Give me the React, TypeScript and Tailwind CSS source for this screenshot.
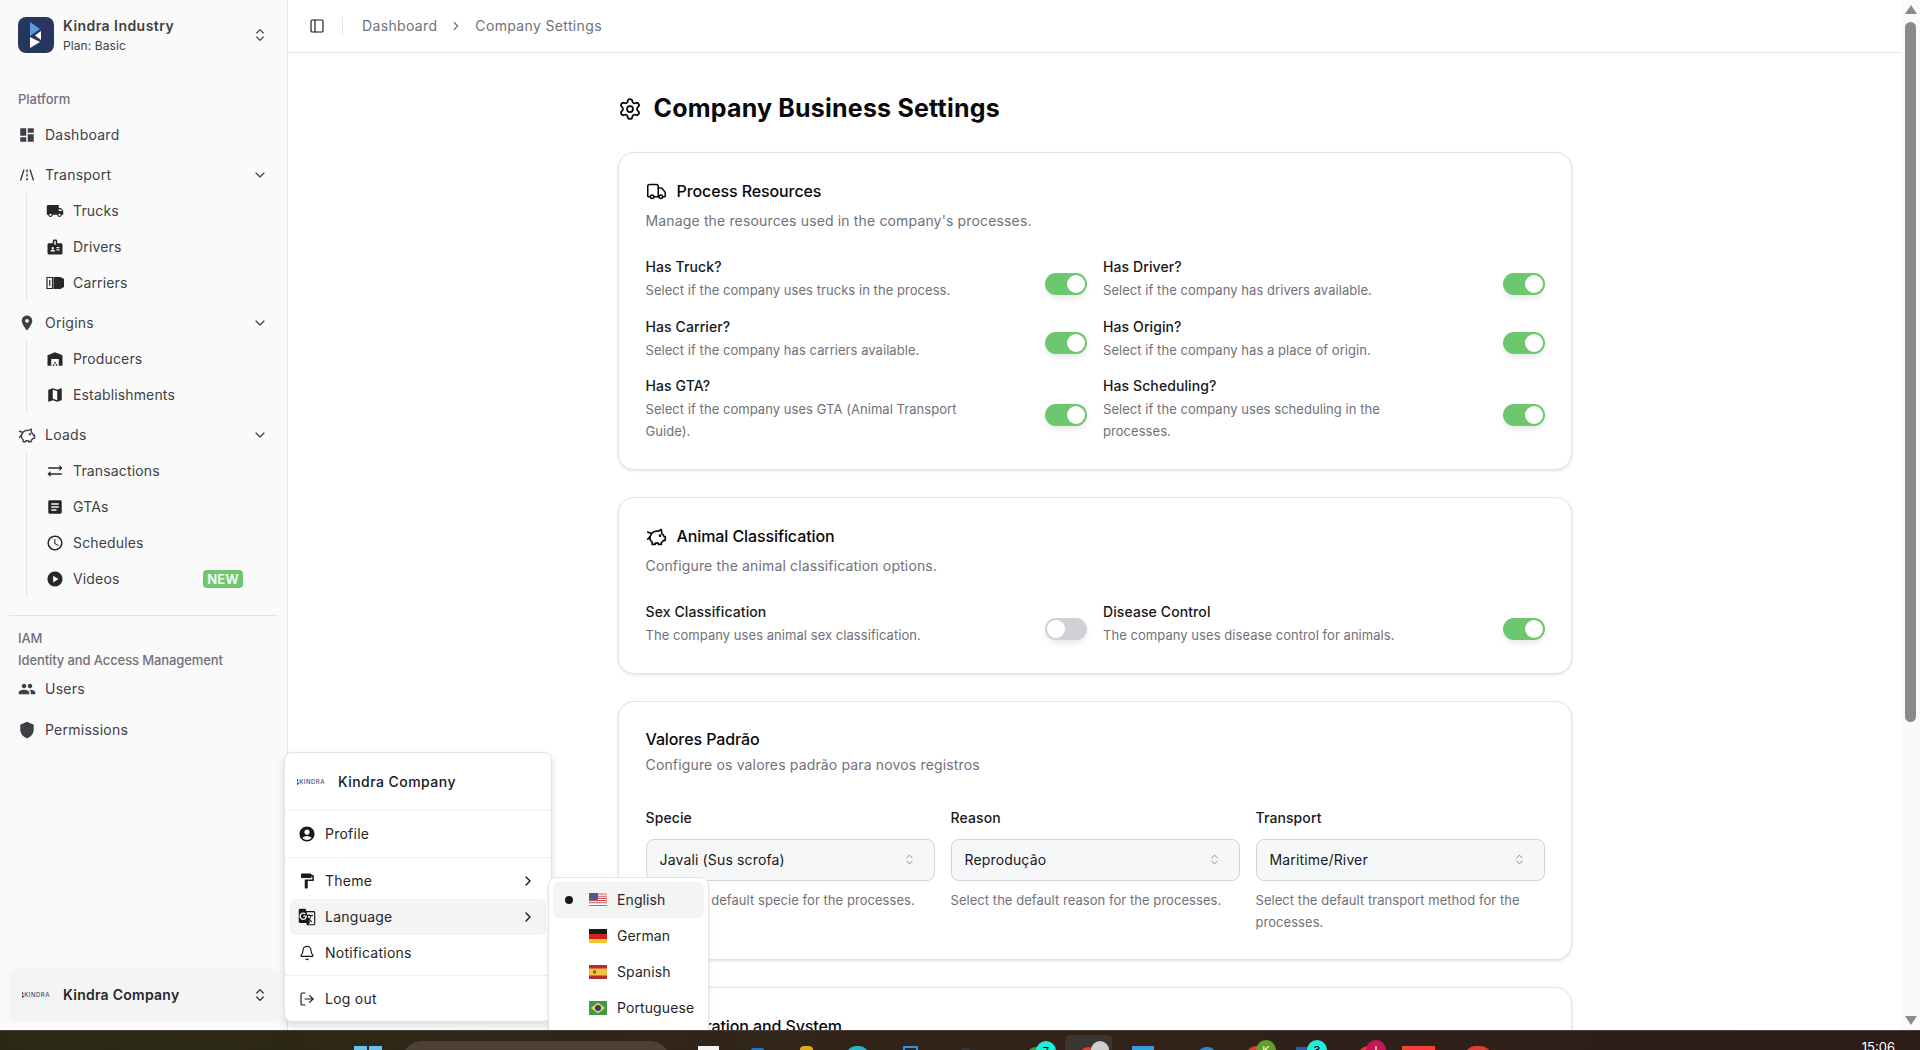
import type { ReactNode } from 'react';
import {
  Bell,
  ChevronDown,
  ChevronRight,
  ChevronsUpDown,
  LogOut,
  PanelLeft,
  Settings,
  Truck,
} from 'lucide-react';
import {
  MdAccessTime,
  MdAccountCircle,
  MdArticle,
  MdBadge,
  MdDashboard,
  MdFormatPaint,
  MdGTranslate,
  MdLocalShipping,
  MdMap,
  MdPeople,
  MdPlace,
  MdPlayCircle,
  MdShield,
  MdSyncAlt,
  MdWarehouse,
} from 'react-icons/md';

const RoadIcon = () => (
  <svg width="16" height="16" viewBox="0 0 16 16" fill="none" stroke="currentColor" strokeWidth="1.4">
    <path d="M5 2.500 1.500 13.500M11 2.500l3.500 11M8 2.500v3M8 7v2.500M8 11v2.500" />
  </svg>
);

const PigIcon = ({ size }: { size: number }) => (
  <svg width={size} height={size} viewBox="0 0 24 24" fill="none" stroke="currentColor" strokeWidth="1.9" strokeLinejoin="round" strokeLinecap="round">
    <path d="M6.500 8.500C8.500 6 11 5.500 14 6l3.500-2 .5 4.500c1.200 1 2 2 2.500 3.500H22v4.500h-2c-.5 1-1.200 1.800-2.500 2.500v2H14v-1.500h-3.500V21H7v-2.500c-2-1.500-2.800-3.500-2.500-6z" />
    <path d="M6.500 8.500 2 7M4.500 12.500 2 15" />
    <circle cx="16" cy="11" r=".6" fill="currentColor" />
  </svg>
);

const CarrierIcon = () => (
  <svg width="18" height="14" viewBox="0 0 18 14">
    <path d="M1 1.500h5.500v11H1z" fill="none" stroke="currentColor" strokeWidth="1.200" />
    <path d="M3.700 4v6" stroke="currentColor" strokeWidth="1.200" />
    <path d="M7.500 1h7l3.500 2v8l-3.500 2h-7z" fill="currentColor" />
  </svg>
);

const KindraLogo = () => (
  <div className="flex items-center w-[28px] shrink-0">
    <svg width="4" height="12" viewBox="0 0 4 12">
      <path d="M0 0l3 3-3 3zM3 6v0L0 8v4l3-3z" fill="#27365f" />
    </svg>
    <span className="text-[6px] leading-none tracking-[0.5px] font-medium text-[#45506e]">KINDRA</span>
  </div>
);

const NavItem = ({ icon, label, chevron }: { icon: ReactNode; label: string; chevron?: boolean }) => (
  <div className="flex items-center h-[37px] pl-[18px] pr-[20px] text-sm tracking-[0.25px] text-[#3f3f46]">
    <span className="flex justify-center w-[18px] text-[#3f3f46]">{icon}</span>
    <span className="ml-[9px] flex-1">{label}</span>
    {chevron && <ChevronDown size={16} strokeWidth={1.75} className="text-[#3f3f46] mr-[-1px]" />}
  </div>
);

const SubItem = ({ icon, label, badge }: { icon: ReactNode; label: string; badge?: boolean }) => (
  <div className="flex items-center h-[36px] pl-[19px] text-sm tracking-[0.15px] text-[#3f3f46]">
    <span className="flex justify-center w-[18px] text-[#27272a]">{icon}</span>
    <span className="ml-[9px] flex-1">{label}</span>
    {badge && (
      <span className="mr-[16px] w-[40px] h-[18px] rounded bg-[#6cc76f] text-[#eef9ee] text-[13px] font-bold leading-[18px] tracking-normal text-center">
        NEW
      </span>
    )}
  </div>
);

const SubGroup = ({ children }: { children: ReactNode }) => (
  <div className="ml-[26px] mr-[28px] border-l border-[#e4e4e7] mb-[3px]">{children}</div>
);

const Sidebar = () => (
  <aside className="relative w-[288px] shrink-0 border-r border-[#e4e4e7] bg-[#fafafa]">
    <div className="flex items-center h-[70px] pl-[18px] pr-[19px]">
      <div className="flex items-center justify-center w-[36px] h-[36px] rounded-lg bg-[#27365f]">
        <svg width="14" height="26" viewBox="0 0 14 26">
          <path d="M1 0l10 7-10 7z" fill="#5b9be0" />
          <path d="M12 9v9l-6-4.500z" fill="#fff" />
          <path d="M1 15l10 5-10 6z" fill="#fff" />
        </svg>
      </div>
      <div className="ml-[9px] flex-1">
        <div className="text-sm font-semibold leading-5 tracking-[0.45px] text-[#3f3f46]">Kindra Industry</div>
        <div className="mt-[2px] text-xs leading-4 tracking-[0.1px] text-[#3f3f46]">Plan: Basic</div>
      </div>
      <ChevronsUpDown size={16} strokeWidth={1.75} className="text-[#3f3f46]" />
    </div>
    <div className="pl-[18px] mt-[19px] h-[20px] text-[13px] font-medium leading-5 text-[#71717a]">Platform</div>
    <div className="mt-[7px]">
      <NavItem icon={<MdDashboard size={18} />} label="Dashboard" />
      <div className="mt-[3px]">
        <NavItem icon={<RoadIcon />} label="Transport" chevron />
      </div>
      <SubGroup>
        <SubItem icon={<MdLocalShipping size={18} />} label="Trucks" />
        <SubItem icon={<MdBadge size={18} />} label="Drivers" />
        <SubItem icon={<CarrierIcon />} label="Carriers" />
      </SubGroup>
      <NavItem icon={<MdPlace size={18} />} label="Origins" chevron />
      <SubGroup>
        <SubItem icon={<MdWarehouse size={18} />} label="Producers" />
        <SubItem icon={<MdMap size={18} />} label="Establishments" />
      </SubGroup>
      <NavItem icon={<PigIcon size={18} />} label="Loads" chevron />
      <SubGroup>
        <SubItem icon={<MdSyncAlt size={18} />} label="Transactions" />
        <SubItem icon={<MdArticle size={18} />} label="GTAs" />
        <SubItem icon={<MdAccessTime size={18} />} label="Schedules" />
        <SubItem icon={<MdPlayCircle size={18} />} label="Videos" badge />
      </SubGroup>
    </div>
    <div className="mx-[9px] mt-[18px] border-t border-[#e4e4e7]" />
    <div className="pl-[18px] pt-[12px] text-[13px] font-medium tracking-[-0.1px] text-[#71717a]">
      <div className="leading-5">IAM</div>
      <div className="leading-5 mt-[2px]">Identity and Access Management</div>
    </div>
    <div>
      <NavItem icon={<MdPeople size={18} />} label="Users" />
      <div className="mt-[4px]">
        <NavItem icon={<MdShield size={18} />} label="Permissions" />
      </div>
    </div>
    <div className="absolute left-[9px] right-[9px] bottom-[8px] h-[54px] flex items-center pl-[13px] pr-[10px] rounded-lg bg-[#f4f4f5]">
      <KindraLogo />
      <span className="ml-[13px] flex-1 text-sm font-semibold tracking-[0.25px] text-[#27272a]">Kindra Company</span>
      <ChevronsUpDown size={16} strokeWidth={1.75} className="text-[#27272a]" />
    </div>
  </aside>
);

const Toggle = ({ on = true, tall }: { on?: boolean; tall?: boolean }) => (
  <div
    className={`flex items-center w-[42px] h-[22px] shrink-0 rounded-full px-[2px] shadow-[0_4px_6px_-1px_rgba(0,0,0,0.1)] ${
      tall ? 'mt-[11px]' : 'mt-[9px]'
    } ${on ? 'justify-end bg-[#6cc76f]' : 'justify-start bg-[#d0d0d6]'}`}
  >
    <div className="w-[18px] h-[18px] rounded-full bg-white" />
  </div>
);

const Setting = ({ label, desc, on = true, tall }: { label: string; desc: string; on?: boolean; tall?: boolean }) => (
  <div className="flex items-center justify-between">
    <div className="max-w-[331px]">
      <div className="text-sm font-medium leading-5 tracking-[0.1px] text-[#18181b]">{label}</div>
      <div className="mt-[3px] text-[13px] leading-[21.500px] tracking-[0.05px] text-[#71717a]">{desc}</div>
    </div>
    <Toggle on={on} tall={tall} />
  </div>
);

const Card = ({
  icon,
  title,
  desc,
  tight,
  children,
}: {
  icon?: ReactNode;
  title: string;
  desc: string;
  tight?: boolean;
  children?: ReactNode;
}) => (
  <section
    className={`rounded-2xl border border-[#e4e4e7] bg-white pl-[27px] pr-[26px] pb-[26px] shadow-[0_1px_3px_rgba(0,0,0,0.12)] ${
      tight ? 'pt-[27px]' : 'pt-[28px]'
    }`}
  >
    <div className="flex items-center h-[20px] gap-[10px] text-base font-medium tracking-[-0.1px] text-[#09090b]">
      {icon}
      <span>{title}</span>
    </div>
    <div className={`${tight ? 'mt-[6px]' : 'mt-[10px]'} text-sm leading-5 tracking-[0.15px] text-[#71717a]`}>{desc}</div>
    {children}
  </section>
);

const SelectField = ({ label, value, hint }: { label: string; value: string; hint: string }) => (
  <div>
    <div className="text-sm font-medium leading-5 tracking-[0.1px] text-[#18181b]">{label}</div>
    <div className="mt-[11px] flex items-center justify-between h-[42px] pl-[13px] pr-[18px] rounded-lg border border-[#d4d4d8] bg-[#f6f7f9] text-sm tracking-[0.15px] text-[#18181b]">
      <span>{value}</span>
      <ChevronsUpDown size={13} strokeWidth={1.5} className="text-[#71717a]" />
    </div>
    <div className="mt-[8px] text-[13px] leading-[22px] tracking-[0.05px] text-[#71717a]">{hint}</div>
  </div>
);

const MainContent = () => (
  <main className="flex-1 min-w-0 overflow-hidden bg-white">
    <header className="flex items-center h-[53px] border-b border-[#e4e4e7] pl-[21px] text-sm tracking-[0.35px] text-[#71717a]">
      <PanelLeft size={16} strokeWidth={1.75} className="text-[#18181b]" />
      <div className="w-px h-[18px] bg-[#e4e4e7] ml-[17px] mr-[19px]" />
      <span>Dashboard</span>
      <ChevronRight size={14} className="mx-[12px]" />
      <span>Company Settings</span>
    </header>
    <div className="w-[954px] mx-auto pt-[40px]">
      <h1 className="flex items-center h-[32px] gap-[12px] text-[25px] font-bold tracking-[0.2px] text-[#09090b]">
        <Settings size={24} strokeWidth={1.75} />
        <span>Company Business Settings</span>
      </h1>
      <div className="mt-[27px] flex flex-col gap-[27px]">
        <Card
          icon={<Truck size={21} strokeWidth={1.75} />}
          title="Process Resources"
          desc="Manage the resources used in the company's processes."
        >
          <div className="mt-[26px] mb-[1px] grid grid-cols-2 gap-x-4 gap-y-[15px]">
            <Setting label="Has Truck?" desc="Select if the company uses trucks in the process." />
            <Setting label="Has Driver?" desc="Select if the company has drivers available." />
            <Setting label="Has Carrier?" desc="Select if the company has carriers available." />
            <Setting label="Has Origin?" desc="Select if the company has a place of origin." />
            <Setting label="Has GTA?" desc="Select if the company uses GTA (Animal Transport Guide)." tall />
            <Setting label="Has Scheduling?" desc="Select if the company uses scheduling in the processes." tall />
          </div>
        </Card>
        <Card
          icon={<PigIcon size={21} />}
          title="Animal Classification"
          desc="Configure the animal classification options."
        >
          <div className="mt-[26px] grid grid-cols-2 gap-x-4">
            <Setting label="Sex Classification" desc="The company uses animal sex classification." on={false} />
            <Setting label="Disease Control" desc="The company uses disease control for animals." />
          </div>
        </Card>
        <Card tight title="Valores Padrão" desc="Configure os valores padrão para novos registros">
          <div className="mt-[33px] grid grid-cols-3 gap-4">
            <SelectField
              label="Specie"
              value="Javali (Sus scrofa)"
              hint="Select the default specie for the processes."
            />
            <SelectField
              label="Reason"
              value="Reprodução"
              hint="Select the default reason for the processes."
            />
            <SelectField
              label="Transport"
              value="Maritime/River"
              hint="Select the default transport method for the processes."
            />
          </div>
        </Card>
        <Card title="Configuration and System" desc="" />
      </div>
    </div>
  </main>
);

const Scrollbar = () => (
  <div className="flex flex-col items-center justify-between w-[19px] shrink-0 bg-[#fafafa] pt-[5px] pb-[5px]">
    <div className="flex flex-col items-center">
      <div className="w-0 h-0 border-x-[6px] border-x-transparent border-b-[9px] border-b-[#8a8a8a]" />
      <div className="mt-[8px] w-[11px] h-[700px] rounded-full bg-[#8a8a8a]" />
    </div>
    <div className="w-0 h-0 border-x-[6px] border-x-transparent border-t-[9px] border-t-[#8a8a8a]" />
  </div>
);

const MenuRow = ({ icon, label, chevron, active }: { icon: ReactNode; label: string; chevron?: boolean; active?: boolean }) => (
  <div className={`flex items-center h-[36px] mx-[5px] pl-[8px] pr-[10px] rounded-md text-sm tracking-[0.25px] text-[#27272a] ${active ? 'bg-[#f4f4f5]' : ''}`}>
    <span className="flex justify-center w-[18px] text-[#18181b]">{icon}</span>
    <span className="ml-[9px] flex-1">{label}</span>
    {chevron && <ChevronRight size={16} className="text-[#18181b]" />}
  </div>
);

const UserMenu = () => (
  <div className="absolute left-[284px] top-[752px] w-[268px] h-[270px] rounded-lg border border-[#e4e4e7] bg-white shadow-[0_4px_8px_rgba(0,0,0,0.14)]">
    <div className="flex items-center h-[58px] pl-[12px] border-b border-[#f0f0f2]">
      <KindraLogo />
      <span className="ml-[13px] text-sm font-medium tracking-[0.45px] text-[#18181b]">Kindra Company</span>
    </div>
    <div className="py-[5px] border-b border-[#f0f0f2]">
      <MenuRow icon={<MdAccountCircle size={18} />} label="Profile" />
    </div>
    <div className="pt-[5px] pb-[4px] border-b border-[#f0f0f2]">
      <MenuRow icon={<MdFormatPaint size={18} />} label="Theme" chevron />
      <MenuRow icon={<MdGTranslate size={18} />} label="Language" chevron active />
      <MenuRow icon={<Bell size={16} strokeWidth={1.75} />} label="Notifications" />
    </div>
    <div className="py-[5px]">
      <MenuRow icon={<LogOut size={16} strokeWidth={1.75} />} label="Log out" />
    </div>
  </div>
);

const FlagUS = () => (
  <svg width="18" height="14" viewBox="0 0 18 14">
    <rect width="18" height="14" fill="#fff" />
    <path d="M0 1h18M0 3.200h18M0 5.400h18M0 7.600h18M0 9.800h18M0 12.500h18" stroke="#c9565f" strokeWidth="1.100" />
    <rect width="9" height="7" fill="#4c5a94" />
  </svg>
);

const FlagDE = () => (
  <svg width="18" height="14" viewBox="0 0 18 14">
    <rect width="18" height="5" fill="#1a1a1a" />
    <rect y="5" width="18" height="5" fill="#d7231e" />
    <rect y="10" width="18" height="4" fill="#f7c52b" />
  </svg>
);

const FlagES = () => (
  <svg width="18" height="14" viewBox="0 0 18 14">
    <rect width="18" height="14" fill="#b5302a" />
    <rect y="3.500" width="18" height="7" fill="#f5c343" />
    <rect x="4" y="5.500" width="3" height="3" fill="#b5432a" />
  </svg>
);

const FlagBR = () => (
  <svg width="18" height="14" viewBox="0 0 18 14">
    <rect width="18" height="14" fill="#3b9d4c" />
    <path d="M9 1.500 16 7l-7 5.500L2 7z" fill="#f5d33b" />
    <circle cx="9" cy="7" r="3" fill="#27408b" />
  </svg>
);

const LangRow = ({ flag, label, active }: { flag: ReactNode; label: string; active?: boolean }) => (
  <div className={`flex items-center h-[36px] pl-[12px] rounded-md text-sm tracking-[0.1px] text-[#27272a] ${active ? 'bg-[#f4f4f5]' : ''}`}>
    <span className="flex justify-center w-[8px]">
      {active && <span className="w-[8px] h-[8px] rounded-full bg-[#18181b]" />}
    </span>
    <span className="ml-[16px]">{flag}</span>
    <span className="ml-[10px]">{label}</span>
  </div>
);

const LanguageMenu = () => (
  <div className="absolute left-[548px] top-[877px] w-[161px] h-[160px] rounded-lg border border-[#e4e4e7] bg-white p-[4px] shadow-md">
    <LangRow flag={<FlagUS />} label="English" active />
    <LangRow flag={<FlagDE />} label="German" />
    <LangRow flag={<FlagES />} label="Spanish" />
    <LangRow flag={<FlagBR />} label="Portuguese" />
  </div>
);

const TaskIcon = ({ w, gap, className }: { w: number; gap: number; className: string }) => (
  <div className={className} style={{ width: w, marginLeft: gap }} />
);

const Taskbar = () => (
  <div className="flex items-start h-[20px] shrink-0 overflow-hidden border-t border-[#4a4036] bg-gradient-to-r from-[#2a2a14] via-[#33231a] to-[#2b1c18]">
    <div className="flex gap-[2px] ml-[354px] mt-[15px]">
      <div className="w-[13px] h-[8px] bg-[#63c4f0]" />
      <div className="w-[13px] h-[8px] bg-[#63c4f0]" />
    </div>
    <div className="ml-[20px] mt-[10px] w-[268px] h-[20px] rounded-t-full bg-[#4d4034]" />
    <TaskIcon w={21} gap={28} className="mt-[15px] h-[8px] bg-[#f4f4f4]" />
    <TaskIcon w={15} gap={31} className="mt-[17px] h-[8px] rounded-t bg-[#1976d2]" />
    <TaskIcon w={13} gap={35} className="mt-[15px] h-[8px] rounded-t bg-[#e6a817]" />
    <TaskIcon w={23} gap={33} className="mt-[15px] h-[10px] rounded-t-full bg-[#27b5c9]" />
    <TaskIcon w={15} gap={34} className="mt-[15px] h-[8px] border-2 border-[#2196f3]" />
    <TaskIcon w={15} gap={40} className="mt-[17px] h-[8px] rounded-t-full bg-[#33363f]" />
    <div className="relative ml-[53px] mt-[16px] w-[22px] h-[10px] rounded-t-full bg-[#2ca84f]">
      <div className="absolute left-[10px] top-[-6px] w-[20px] h-[20px] rounded-full bg-[#1cf0d8] text-black text-[11px] font-medium leading-[20px] text-center">7</div>
    </div>
    <div className="relative ml-[17px] mt-[4px] w-[47px] h-[20px] rounded-t bg-[#3b3530]">
      <div className="absolute left-[14px] top-[12px] w-[18px] h-[12px] rounded-t-full bg-[#e53935]" />
      <div className="absolute left-[26px] top-[6px] w-[18px] h-[18px] rounded-full bg-[#cfcfcf]" />
    </div>
    <TaskIcon w={22} gap={20} className="mt-[15px] h-[8px] bg-[#3b9ae0]" />
    <TaskIcon w={18} gap={44} className="mt-[16px] h-[8px] rounded-t-full bg-[#1e88e5]" />
    <div className="relative ml-[30px] mt-[15px] w-[20px] h-[10px] rounded-t-full bg-[#e53935]">
      <div className="absolute left-[10px] top-[-6px] w-[20px] h-[20px] rounded-full bg-[#5f9e2f] text-white text-[11px] leading-[20px] text-center">K</div>
    </div>
    <div className="relative ml-[30px] mt-[16px] w-[20px] h-[10px] bg-[#1565c0]">
      <div className="absolute left-[11px] top-[-7px] w-[20px] h-[20px] rounded-full bg-[#1cf0d8] text-black text-[11px] font-medium leading-[20px] text-center">3</div>
    </div>
    <div className="relative ml-[42px] mt-[15px] w-[20px] h-[10px] rounded-t-full bg-[#e53935]">
      <div className="absolute left-[8px] top-[-6px] w-[20px] h-[20px] rounded-full bg-[#c2185b] text-white text-[11px] leading-[20px] text-center">I</div>
    </div>
    <TaskIcon w={33} gap={24} className="mt-[15px] h-[8px] bg-[#f44336]" />
    <TaskIcon w={26} gap={30} className="mt-[15px] h-[10px] rounded-t-full bg-[#e53935]" />
    <div className="ml-auto mr-[25px] mt-[8px] text-[13px] leading-4 text-white">15:06</div>
  </div>
);

export default function App() {
  return (
    <div className="relative flex flex-col h-[1050px] overflow-hidden bg-white font-['Inter',sans-serif]">
      <div className="relative flex flex-1 min-h-0 overflow-hidden">
        <Sidebar />
        <MainContent />
        <Scrollbar />
        <UserMenu />
        <LanguageMenu />
      </div>
      <Taskbar />
    </div>
  );
}
